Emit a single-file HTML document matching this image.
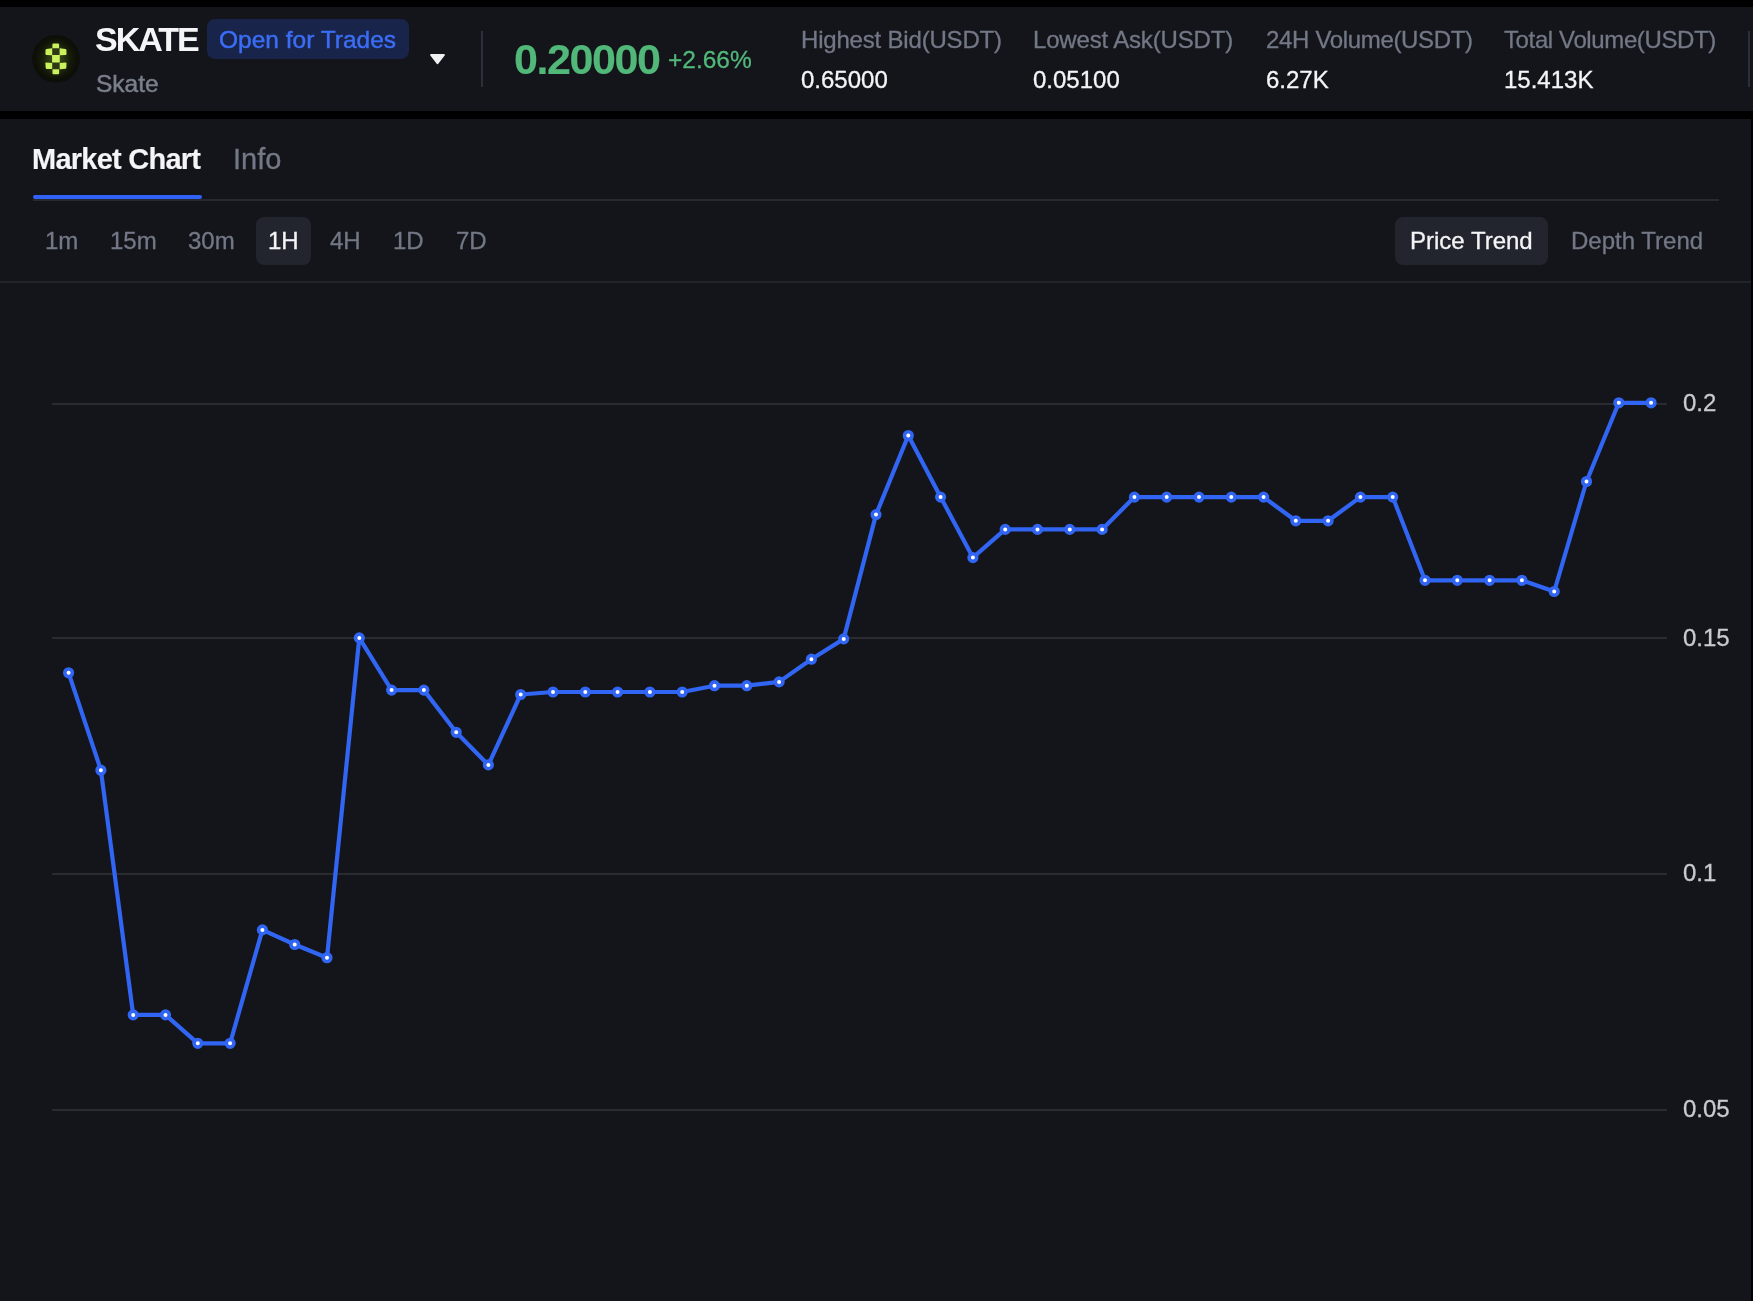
<!DOCTYPE html>
<html><head><meta charset="utf-8">
<style>
*{margin:0;padding:0;box-sizing:border-box}
html,body{width:1753px;height:1301px;overflow:hidden;background:#000;font-family:"Liberation Sans",sans-serif}
.a{position:absolute;white-space:nowrap;line-height:1;will-change:transform;-webkit-text-stroke-width:0.3px}
#hdr{position:absolute;left:0;top:7px;width:1753px;height:104px;background:#14151a}
#main{position:absolute;left:0;top:119px;width:1751px;height:1182px;background:#14151a}
</style></head><body>
<div id="hdr"></div>
<div id="main"></div>
<!-- logo -->
<svg class="a" style="left:0;top:0" width="120" height="111" viewBox="0 0 120 111">
<defs><radialGradient id="lg" cx="0.5" cy="0.5" r="0.5"><stop offset="0" stop-color="#2a3412"/><stop offset="0.5" stop-color="#1a200b"/><stop offset="0.85" stop-color="#0e1107"/><stop offset="1" stop-color="#0b0d08"/></radialGradient>
<filter id="bl" x="-20%" y="-20%" width="140%" height="140%"><feGaussianBlur stdDeviation="0.3"/></filter>
<filter id="gl" x="-80%" y="-80%" width="260%" height="260%"><feGaussianBlur stdDeviation="3"/></filter></defs>
<circle cx="56" cy="58.8" r="23.8" fill="url(#lg)"/>
<ellipse cx="56" cy="59" rx="9" ry="14" fill="#9cc040" opacity="0.16" filter="url(#gl)"/>
<g filter="url(#bl)">
<rect x="52.2" y="48.3" width="7.4" height="7.0" fill="#2f3915"/>
<rect x="52.2" y="62.6" width="7.4" height="6.8" fill="#2f3915"/>
<path fill="#c9f25c" d="M52.4 44.6 Q52.5 43.6 53.5 43.6 L58.1 43.6 Q59.1 43.6 59.1 44.6 L59.1 48.3 L52.4 48.3 Z
M45.6 49.5 Q45.8 49.0 46.5 49.0 L52.2 48.3 L52.2 55.3 L46.3 54.9 Q45.4 54.8 45.4 54.0 Z
M59.6 48.3 L65.4 49.0 Q66.3 49.1 66.4 50.0 L66.5 54.3 Q66.5 55.1 65.6 55.1 L59.6 55.3 Z
M52.1 55.0 L59.8 55.0 L59.8 62.4 L52.1 62.4 Z
M45.4 62.7 Q45.4 62.4 46.0 62.4 L52.2 63.0 L52.2 69.0 L46.6 68.9 Q45.8 68.8 45.7 68.0 Z
M59.7 63.0 L65.8 62.4 Q66.5 62.4 66.5 63.2 L66.3 68.1 Q66.2 68.8 65.5 68.8 L59.7 69.2 Z
M52.5 69.2 L59.1 69.2 L59.1 73.4 Q59.1 74.2 58.2 74.2 L53.4 74.2 Q52.5 74.2 52.5 73.4 Z"/>
</g>
</svg>
<div class="a" id="skate" style="left:95px;top:22px;font-size:34px;font-weight:bold;color:#f5f5f7;letter-spacing:-2.0px;-webkit-text-stroke-width:0">SKATE</div>
<div class="a" style="left:207px;top:19px;width:202px;height:40px;border-radius:8px;background:#19244a"></div>
<div class="a" id="oft" style="left:219px;top:27.5px;font-size:24.5px;color:#3b6ef5;-webkit-text-stroke:0.45px #3b6ef5">Open for Trades</div>
<div class="a" id="sk2" style="left:96px;top:71.5px;font-size:24.5px;color:#7a7f8c;-webkit-text-stroke:0.5px #7a7f8c">Skate</div>
<svg class="a" style="left:428px;top:52px" width="19" height="14" viewBox="0 0 19 14"><path d="M3.1 3.0 L15.9 3.0 L9.5 11.1 Z" fill="#f0f0f2" stroke="#f0f0f2" stroke-width="2" stroke-linejoin="round"/></svg>
<div class="a" style="left:481px;top:31px;width:2px;height:56px;background:#2c2f3a"></div>
<div class="a" id="price" style="left:514px;top:38px;font-size:43px;font-weight:bold;color:#52b87a;letter-spacing:-1.4px;-webkit-text-stroke-width:0.15px">0.20000</div>
<div class="a" id="chg" style="left:667.5px;top:47.5px;font-size:24.5px;color:#52b87a">+2.66%</div>

<div class="a lbl" style="left:801px;top:28px;font-size:24px;color:#737886;letter-spacing:-0.19px">Highest Bid(USDT)</div>
<div class="a val" style="left:801px;top:68px;font-size:24px;color:#f5f5f7">0.65000</div>
<div class="a lbl" style="left:1033px;top:28px;font-size:24px;color:#737886;letter-spacing:-0.17px">Lowest Ask(USDT)</div>
<div class="a val" style="left:1033px;top:68px;font-size:24px;color:#f5f5f7">0.05100</div>
<div class="a lbl" style="left:1266px;top:28px;font-size:24px;color:#737886;letter-spacing:-0.33px">24H Volume(USDT)</div>
<div class="a val" style="left:1266px;top:68px;font-size:24px;color:#f5f5f7">6.27K</div>
<div class="a lbl" style="left:1504px;top:28px;font-size:24px;color:#737886;letter-spacing:-0.38px">Total Volume(USDT)</div>
<div class="a val" style="left:1504px;top:68px;font-size:24px;color:#f5f5f7">15.413K</div>
<div class="a" style="left:1748px;top:31px;width:2px;height:56px;background:#2c2f3a"></div>

<!-- tabs -->
<div class="a" id="mc" style="left:32px;top:145px;font-size:29px;font-weight:bold;color:#f5f5f7;letter-spacing:-0.75px;-webkit-text-stroke-width:0.15px">Market Chart</div>
<div class="a" id="info" style="left:233px;top:145px;font-size:29px;color:#737886">Info</div>
<div class="a" style="left:33px;top:199px;width:1686px;height:2px;background:#262832"></div>
<div class="a" style="left:33px;top:195px;width:169px;height:4px;border-radius:2px;background:#2f62f5"></div>

<div class="a" style="left:256px;top:217px;width:55px;height:48px;border-radius:8px;background:#22252e"></div>
<div class="a tf" style="left:45px;top:229px;font-size:24px;color:#737886">1m</div>
<div class="a tf" style="left:110px;top:229px;font-size:24px;color:#737886">15m</div>
<div class="a tf" style="left:188px;top:229px;font-size:24px;color:#737886">30m</div>
<div class="a tf" style="left:268px;top:229px;font-size:24px;color:#f5f5f7">1H</div>
<div class="a tf" style="left:330px;top:229px;font-size:24px;color:#737886">4H</div>
<div class="a tf" style="left:393px;top:229px;font-size:24px;color:#737886">1D</div>
<div class="a tf" style="left:456px;top:229px;font-size:24px;color:#737886">7D</div>

<div class="a" style="left:1395px;top:217px;width:153px;height:48px;border-radius:8px;background:#22252e"></div>
<div class="a" id="pt" style="left:1410px;top:229px;font-size:24px;color:#f5f5f7">Price Trend</div>
<div class="a" id="dt" style="left:1571px;top:229px;font-size:24px;color:#737886">Depth Trend</div>
<div class="a" style="left:0;top:281px;width:1751px;height:2px;background:#22242c"></div>

<!-- chart -->
<svg class="a" style="left:0;top:0" width="1753" height="1301" viewBox="0 0 1753 1301">
<g fill="#2a2b30">
<rect x="52" y="403" width="1615" height="2"/>
<rect x="52" y="637" width="1615" height="2"/>
<rect x="52" y="873" width="1615" height="2"/>
<rect x="52" y="1109" width="1615" height="2"/>
</g>
<polyline points="68.6,672.8 100.9,770.2 133.2,1014.9 165.5,1014.9 197.8,1043.3 230.1,1043.3 262.4,929.9 294.7,944.5 327.0,957.7 359.3,637.9 391.6,690.1 423.9,690.1 456.2,732.3 488.4,764.9 520.7,694.5 553.0,692.0 585.3,692.0 617.6,692.0 649.9,692.0 682.2,692.0 714.5,685.7 746.8,685.7 779.1,681.9 811.4,659.2 843.7,638.9 876.0,514.6 908.3,435.5 940.6,497.1 972.9,557.6 1005.2,529.4 1037.5,529.4 1069.8,529.4 1102.1,529.4 1134.4,497.1 1166.7,497.1 1199.0,497.1 1231.3,497.1 1263.6,497.1 1295.8,520.8 1328.1,520.8 1360.4,497.1 1392.7,497.1 1425.0,580.3 1457.3,580.3 1489.6,580.3 1521.9,580.3 1554.2,591.5 1586.5,481.5 1618.8,402.8 1651.1,402.8" fill="none" stroke="#3165f3" stroke-width="4.2" stroke-linejoin="round"/>
<g fill="#ffffff" stroke="#3165f3" stroke-width="3.6"><circle cx="68.6" cy="672.8" r="3.8"/><circle cx="100.9" cy="770.2" r="3.8"/><circle cx="133.2" cy="1014.9" r="3.8"/><circle cx="165.5" cy="1014.9" r="3.8"/><circle cx="197.8" cy="1043.3" r="3.8"/><circle cx="230.1" cy="1043.3" r="3.8"/><circle cx="262.4" cy="929.9" r="3.8"/><circle cx="294.7" cy="944.5" r="3.8"/><circle cx="327.0" cy="957.7" r="3.8"/><circle cx="359.3" cy="637.9" r="3.8"/><circle cx="391.6" cy="690.1" r="3.8"/><circle cx="423.9" cy="690.1" r="3.8"/><circle cx="456.2" cy="732.3" r="3.8"/><circle cx="488.4" cy="764.9" r="3.8"/><circle cx="520.7" cy="694.5" r="3.8"/><circle cx="553.0" cy="692.0" r="3.8"/><circle cx="585.3" cy="692.0" r="3.8"/><circle cx="617.6" cy="692.0" r="3.8"/><circle cx="649.9" cy="692.0" r="3.8"/><circle cx="682.2" cy="692.0" r="3.8"/><circle cx="714.5" cy="685.7" r="3.8"/><circle cx="746.8" cy="685.7" r="3.8"/><circle cx="779.1" cy="681.9" r="3.8"/><circle cx="811.4" cy="659.2" r="3.8"/><circle cx="843.7" cy="638.9" r="3.8"/><circle cx="876.0" cy="514.6" r="3.8"/><circle cx="908.3" cy="435.5" r="3.8"/><circle cx="940.6" cy="497.1" r="3.8"/><circle cx="972.9" cy="557.6" r="3.8"/><circle cx="1005.2" cy="529.4" r="3.8"/><circle cx="1037.5" cy="529.4" r="3.8"/><circle cx="1069.8" cy="529.4" r="3.8"/><circle cx="1102.1" cy="529.4" r="3.8"/><circle cx="1134.4" cy="497.1" r="3.8"/><circle cx="1166.7" cy="497.1" r="3.8"/><circle cx="1199.0" cy="497.1" r="3.8"/><circle cx="1231.3" cy="497.1" r="3.8"/><circle cx="1263.6" cy="497.1" r="3.8"/><circle cx="1295.8" cy="520.8" r="3.8"/><circle cx="1328.1" cy="520.8" r="3.8"/><circle cx="1360.4" cy="497.1" r="3.8"/><circle cx="1392.7" cy="497.1" r="3.8"/><circle cx="1425.0" cy="580.3" r="3.8"/><circle cx="1457.3" cy="580.3" r="3.8"/><circle cx="1489.6" cy="580.3" r="3.8"/><circle cx="1521.9" cy="580.3" r="3.8"/><circle cx="1554.2" cy="591.5" r="3.8"/><circle cx="1586.5" cy="481.5" r="3.8"/><circle cx="1618.8" cy="402.8" r="3.8"/><circle cx="1651.1" cy="402.8" r="3.8"/></g>
</svg>
<div class="a ax" style="left:1683px;top:391px;font-size:24px;color:#c9cacf">0.2</div>
<div class="a ax" style="left:1683px;top:626px;font-size:24px;color:#c9cacf">0.15</div>
<div class="a ax" style="left:1683px;top:861px;font-size:24px;color:#c9cacf">0.1</div>
<div class="a ax" style="left:1683px;top:1097px;font-size:24px;color:#c9cacf">0.05</div>
</body></html>
